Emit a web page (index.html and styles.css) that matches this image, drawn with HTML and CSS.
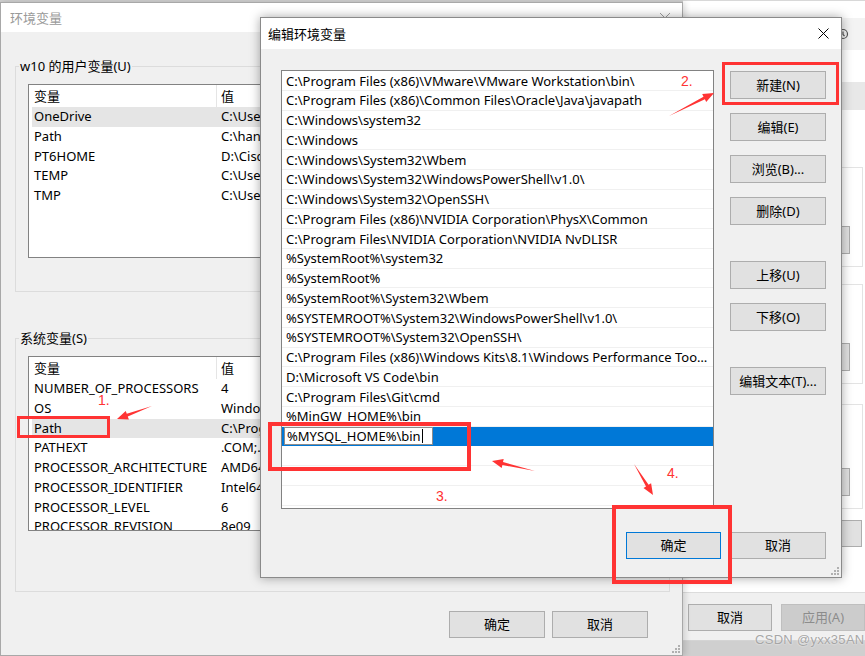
FILE: index.html
```html
<!DOCTYPE html>
<html lang="zh-CN">
<head>
    <meta charset="UTF-8">
    <title>编辑环境变量</title>
    <link rel="stylesheet" href="styles.css">
</head>
<body>
<div class="desk">

    <!-- 系统属性, behind everything -->
    <div class="win win-sys">
        <div class="sys-head"></div>
        <div class="sys-bar">
            <svg class="sys-icon" width="12" height="12" viewBox="0 0 12 12"><circle cx="6" cy="6" r="4.5" fill="none" stroke="#555" stroke-width="1.2"/><path d="M6 3.5v3l1.5 1.5" fill="none" stroke="#555" stroke-width="1.2"/></svg>
        </div>
        <div class="sys-gap"></div>
        <div class="sys-tabs"></div>
        <div class="sys-page">
            <div class="sys-group sys-g1"><span class="btn sys-btn"></span></div>
            <div class="sys-group sys-g2"><span class="btn sys-btn"></span></div>
            <div class="sys-group sys-g3"><span class="btn sys-btn"></span></div>
            <span class="btn sys-wide"></span>
        </div>
        <div class="sys-foot">
            <button class="btn">取消</button>
            <button class="btn btn-off">应用(A)</button>
        </div>
    </div>

    <!-- 环境变量 -->
    <div class="win win-env">
        <div class="titlebar env-titlebar">
            <span class="title">环境变量</span>
            <svg class="close" width="10" height="10" viewBox="0 0 10 10"><path d="M0 0L10 10M10 0L0 10" stroke="#a0a0a0" stroke-width="1"/></svg>
        </div>
        <div class="env-body">
            <div class="group">
                <span class="group-title">w10 的用户变量(U)</span>
                <div class="vlist vlist-user">
                    <div class="vrow vhead"><span class="vname">变量</span><span class="vval">值</span></div>
                    <div class="vrow vsel"><span class="vname">OneDrive</span><span class="vval">C:\Users\yxx\OneDrive</span></div>
                    <div class="vrow"><span class="vname">Path</span><span class="vval">C:\hanjiaming\bin</span></div>
                    <div class="vrow"><span class="vname">PT6HOME</span><span class="vval">D:\Cisco Packet Tracer</span></div>
                    <div class="vrow"><span class="vname">TEMP</span><span class="vval">C:\Users\yxx\AppData\Local\Temp</span></div>
                    <div class="vrow"><span class="vname">TMP</span><span class="vval">C:\Users\yxx\AppData\Local\Temp</span></div>
                </div>
            </div>
            <div class="group group-sys">
                <span class="group-title">系统变量(S)</span>
                <div class="vlist vlist-sys">
                    <div class="vrow vhead"><span class="vname">变量</span><span class="vval">值</span></div>
                    <div class="vrow"><span class="vname">NUMBER_OF_PROCESSORS</span><span class="vval">4</span></div>
                    <div class="vrow"><span class="vname">OS</span><span class="vval">Windows_NT</span></div>
                    <div class="vrow vsel"><span class="vname">Path</span><span class="vval">C:\Program Files (x86)\VMware</span></div>
                    <div class="vrow"><span class="vname">PATHEXT</span><span class="vval">.COM;.EXE;.BAT;.CMD</span></div>
                    <div class="vrow"><span class="vname">PROCESSOR_ARCHITECTURE</span><span class="vval">AMD64</span></div>
                    <div class="vrow"><span class="vname">PROCESSOR_IDENTIFIER</span><span class="vval">Intel64 Family 6 Model 158</span></div>
                    <div class="vrow"><span class="vname">PROCESSOR_LEVEL</span><span class="vval">6</span></div>
                    <div class="vrow"><span class="vname">PROCESSOR_REVISION</span><span class="vval">8e09</span></div>
                </div>
            </div>
            <div class="env-foot">
                <button class="btn">确定</button>
                <button class="btn">取消</button>
            </div>
        </div>
        <svg class="grip" width="8" height="8" viewBox="0 0 8 8"><g fill="#b0b0b0"><rect x="6" y="0" width="2" height="2"/><rect x="3" y="3" width="2" height="2"/><rect x="6" y="3" width="2" height="2"/><rect x="0" y="6" width="2" height="2"/><rect x="3" y="6" width="2" height="2"/><rect x="6" y="6" width="2" height="2"/></g></svg>
    </div>

    <!-- 编辑环境变量 -->
    <div class="win win-edit">
        <div class="titlebar edit-titlebar">
            <span class="title">编辑环境变量</span>
            <svg class="close" width="11" height="11" viewBox="0 0 11 11"><path d="M0.5 0.5L10.5 10.5M10.5 0.5L0.5 10.5" stroke="#000" stroke-width="1"/></svg>
        </div>
        <div class="edit-body">
            <div class="plist">
                <div class="prow">C:\Program Files (x86)\VMware\VMware Workstation\bin\</div>
                <div class="prow">C:\Program Files (x86)\Common Files\Oracle\Java\javapath</div>
                <div class="prow">C:\Windows\system32</div>
                <div class="prow">C:\Windows</div>
                <div class="prow">C:\Windows\System32\Wbem</div>
                <div class="prow">C:\Windows\System32\WindowsPowerShell\v1.0\</div>
                <div class="prow">C:\Windows\System32\OpenSSH\</div>
                <div class="prow">C:\Program Files (x86)\NVIDIA Corporation\PhysX\Common</div>
                <div class="prow">C:\Program Files\NVIDIA Corporation\NVIDIA NvDLISR</div>
                <div class="prow">%SystemRoot%\system32</div>
                <div class="prow">%SystemRoot%</div>
                <div class="prow">%SystemRoot%\System32\Wbem</div>
                <div class="prow">%SYSTEMROOT%\System32\WindowsPowerShell\v1.0\</div>
                <div class="prow">%SYSTEMROOT%\System32\OpenSSH\</div>
                <div class="prow">C:\Program Files (x86)\Windows Kits\8.1\Windows Performance Toolkit\</div>
                <div class="prow">D:\Microsoft VS Code\bin</div>
                <div class="prow">C:\Program Files\Git\cmd</div>
                <div class="prow">%MinGW_HOME%\bin</div>
                <div class="prow prow-sel"><span class="pedit">%MYSQL_HOME%\bin<i class="caret"></i></span></div>
                <div class="prow"></div>
                <div class="prow"></div>
                <div class="prow"></div>
            </div>
            <div class="pbtns">
                <button class="btn">新建(N)</button>
                <button class="btn">编辑(E)</button>
                <button class="btn">浏览(B)...</button>
                <button class="btn">删除(D)</button>
                <button class="btn gap-big">上移(U)</button>
                <button class="btn">下移(O)</button>
                <button class="btn gap-big">编辑文本(T)...</button>
            </div>
        </div>
        <div class="edit-foot">
            <button class="btn btn-default">确定</button>
            <button class="btn">取消</button>
        </div>
        <svg class="grip" width="8" height="8" viewBox="0 0 8 8"><g fill="#b0b0b0"><rect x="6" y="0" width="2" height="2"/><rect x="3" y="3" width="2" height="2"/><rect x="6" y="3" width="2" height="2"/><rect x="0" y="6" width="2" height="2"/><rect x="3" y="6" width="2" height="2"/><rect x="6" y="6" width="2" height="2"/></g></svg>
    </div>

    <!-- red annotations -->
    <div class="mark mark-1"></div>
    <div class="mark mark-2"></div>
    <div class="mark mark-3"></div>
    <div class="mark mark-4"></div>
    <span class="note note-1">1.</span>
    <span class="note note-2">2.</span>
    <span class="note note-3">3.</span>
    <span class="note note-4">4.</span>
    <svg class="arrows" width="865" height="656" viewBox="0 0 865 656">
        <g fill="#ff3333">
            <polygon points="152,406 126.8,413.8 125.7,411 117,419 128.9,419.4 127.8,416.6"/>
            <polygon points="669,116 704.9,99.3 706.2,102 714,93 702.2,94 703.5,96.7"/>
            <polygon points="535,471 503,462 503.7,459.1 492,461 501.7,467.9 502.4,465"/>
            <polygon points="634,464 646,486.4 643.5,488 653,495 651.1,483.3 648.6,484.8"/>
        </g>
    </svg>

    <span class="watermark">CSDN @yxx35AN</span>
</div>
</body>
</html>
```

FILE: styles.css
```css
* { box-sizing: border-box; }
body { margin: 0; font-family: "Noto Sans", "Noto Sans CJK SC", sans-serif; font-size: 13px; color: #000; }
button { font: inherit; color: inherit; }

.desk { position: relative; width: 865px; height: 656px; overflow: hidden; background: #cfcfcf; }
.win { position: absolute; display: flex; flex-direction: column; }

.titlebar { display: flex; align-items: center; background: #fff; flex: none; }
.title { font-size: 13px; }
.close { margin-left: auto; }

.btn {
    display: block;
    background: #e1e1e1;
    border: 1px solid #adadad;
    width: 96px;
    height: 28px;
    padding: 0;
    line-height: 26px;
    text-align: center;
    white-space: nowrap;
}
.btn-default { border-color: #0078d7; }
.btn-off { background: #cccccc; border-color: #bfbfbf; color: #8c8c8c; }

.grip { position: absolute; right: 2px; bottom: 2px; }

/* system properties window at the back */
.win-sys { left: 683px; top: 0; width: 182px; height: 641px; background: #f0f0f0; border-bottom: 1px solid #d4d4d4; }
.sys-head { height: 18px; background: #fff; border-top: 1px solid #d8d8d8; }
.sys-bar { height: 32px; background: #f3f3f3; display: flex; align-items: center; padding-left: 154px; }
.sys-gap { height: 32px; background: #fff; }
.sys-tabs { height: 28px; background: #e8e8e8; }
.sys-page { height: 483px; background: #fff; border-bottom: 1px solid #dcdcdc; padding-top: 57px; }
.sys-group {
    display: flex;
    justify-content: flex-end;
    align-items: flex-end;
    margin: 0 2px 0 20px;
    padding: 0 12px 12px 0;
    border: 1px solid #e3e3e3;
}
.sys-g1 { height: 100px; }
.sys-g2 { height: 100px; margin-top: 17px; }
.sys-g3 { height: 105px; margin-top: 20px; }
.sys-btn { width: 95px; }
.sys-wide { width: 98px; height: 27px; margin: 11px 3px 0 auto; }
.sys-foot { display: flex; gap: 9px; padding: 11px 0 0 5px; }
.sys-foot .btn { width: 95px; height: 27px; line-height: 25px; }

/* 环境变量 */
.win-env { left: 0; top: 2px; width: 683px; height: 654px; background: #f0f0f0; border: 1px solid #a8a8a8; box-shadow: 2px 0 6px rgba(0, 0, 0, 0.15); }
.env-titlebar { height: 29px; }
.env-titlebar .title { padding-left: 9px; color: #9a9a9a; }
.env-titlebar .close { margin-right: 12px; }
.env-body { padding: 34px 12px 0 14px; }

.group { border: 1px solid #dcdcdc; padding: 0 0 33px 12px; }
.group-sys { margin-top: 46px; padding-bottom: 60px; }
.group-title {
    display: block;
    width: max-content;
    margin: -10px 0 0 -9px;
    padding: 0 1px;
    background: #f0f0f0;
    line-height: 18px;
}

.vlist { margin-top: 9px; width: 630px; border: 1px solid #828282; background: #fff; overflow: hidden; }
.vlist-user { height: 174px; }
.vlist-sys { height: 175px; }
.vrow { display: flex; height: 19.75px; line-height: 19.75px; white-space: nowrap; }
.vhead { height: 22px; line-height: 22px; }
.vname { width: 188px; padding-left: 5px; flex: none; }
.vhead .vname { border-right: 1px solid #e5e5e5; }
.vval { padding-left: 4px; }
.vsel { background: #e5e5e5; margin-left: 3px; }
.vsel .vname { width: 185px; padding-left: 2px; }

.env-foot { display: flex; justify-content: flex-end; gap: 7px; margin-top: 19px; padding-right: 22px; }
.env-foot .btn { height: 27px; line-height: 25px; }

/* 编辑环境变量 */
.win-edit { left: 260px; top: 17px; width: 582px; height: 561px; background: #f0f0f0; border: 1px solid #8a8a8a; box-shadow: 0 0 10px rgba(0, 0, 0, 0.35); }
.edit-titlebar { height: 31px; }
.edit-titlebar .title { padding-left: 7px; }
.edit-titlebar .close { margin-right: 12px; }
.edit-body { display: flex; padding: 21px 15px 0 20px; }

.plist { width: 433px; height: 439px; flex: none; border: 1px solid #828282; background: #fff; overflow: hidden; }
.prow {
    height: 19.75px;
    line-height: 19px;
    padding: 0.5px 4px 0 4px;
    border-bottom: 1px solid #f0f0f0;
    white-space: nowrap;
    overflow: hidden;
    text-overflow: ellipsis;
}
.prow-sel { background: #0078d7; padding: 0 0 0 2px; border-bottom-color: #0078d7; }
.pedit {
    display: flex;
    align-items: center;
    width: 149px;
    height: 18.75px;
    padding-left: 2px;
    background: #fff;
    border: 1px solid #8c8c8c;
    line-height: 16px;
}
.caret { display: inline-block; width: 1px; height: 14px; margin-left: 1px; background: #000; }

.pbtns { display: flex; flex-direction: column; gap: 14px; margin-left: 16px; padding-top: 1px; }
.gap-big { margin-top: 22px; }

.edit-foot { display: flex; justify-content: flex-end; gap: 9px; padding: 23px 15px 0 0; }
.edit-foot .btn { height: 27px; line-height: 25px; }
.edit-foot .btn-default { width: 95px; }

/* annotations */
.mark { position: absolute; border: 3px solid #ff3333; }
.mark-1 { left: 17px; top: 416px; width: 93px; height: 22px; }
.mark-2 { left: 722px; top: 62px; width: 117px; height: 43px; }
.mark-3 { left: 268px; top: 422px; width: 203px; height: 49px; border-width: 4px; }
.mark-4 { left: 612px; top: 505px; width: 120px; height: 79px; border-width: 4px; }

.note { position: absolute; color: #ff3333; font: 14px/14px "Liberation Sans", sans-serif; }
.note-1 { left: 98px; top: 393px; }
.note-2 { left: 681px; top: 74px; }
.note-3 { left: 436px; top: 489px; }
.note-4 { left: 667px; top: 466px; }

.arrows { position: absolute; left: 0; top: 0; pointer-events: none; }

.watermark {
    position: absolute;
    left: 755px;
    top: 631px;
    font: 13px/18px "Liberation Sans", sans-serif;
    color: #a6a6a6;
    letter-spacing: 0.3px;
    text-shadow: 0 0 2px #fff;
}
```
